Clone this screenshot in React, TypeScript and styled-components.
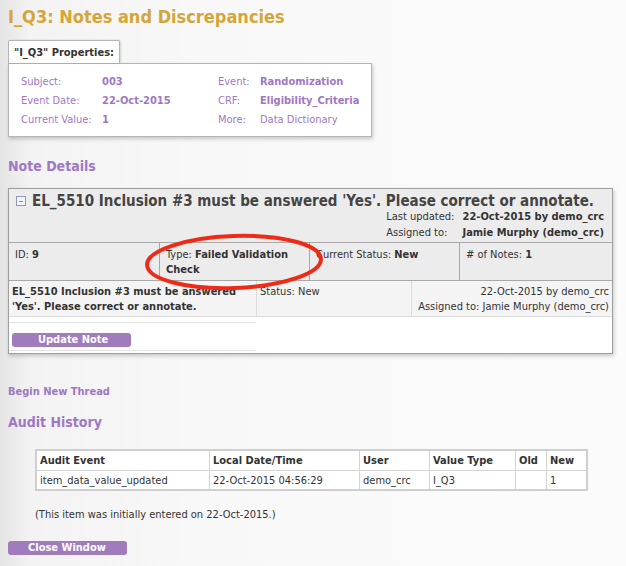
import styled, { createGlobalStyle } from 'styled-components';

const GlobalStyle = createGlobalStyle`
  body {
    margin: 0;
    background: linear-gradient(to right, #e4e4e4 0px, #f3f3f3 30px, #f8f8f8 200px, #fbfbfb 626px);
    font-family: Tahoma, 'DejaVu Sans Condensed', 'DejaVu Sans', sans-serif;
    font-size: 11px;
    color: #333;
  }
`;

const purple = '#9f78c3';

const Page = styled.div`
  position: relative;
  padding: 6px 8px 20px 8px;
  width: 626px;
  box-sizing: border-box;
`;

const Title = styled.h1`
  margin: 0;
  font-size: 18px;
  line-height: 22px;
  color: #d4a638;
  font-weight: bold;
`;

const PropsWrap = styled.div`
  margin-top: 12px;
  width: 364px;
`;

const PropsTab = styled.div`
  display: inline-block;
  background: #fff;
  border: 1px solid #b5b5b5;
  border-bottom: none;
  border-radius: 2px 2px 0 0;
  padding: 5px 5px 4px 5px;
  font-weight: bold;
  color: #333;
  box-shadow: 1px 0 2px rgba(0, 0, 0, 0.15);
`;

const PropsBox = styled.div`
  background: #fff;
  border: 1px solid #b5b5b5;
  box-shadow: 1px 2px 4px rgba(0, 0, 0, 0.2);
  padding: 8px 12px 7px 12px;
  display: grid;
  grid-template-columns: 81px 116px 42px 1fr;
  grid-auto-rows: 19px;
  align-items: center;
`;

const PropLabel = styled.span`
  color: ${purple};
`;

const PropValue = styled.span<{ $bold?: boolean }>`
  color: ${purple};
  font-weight: ${(p) => (p.$bold ? 'bold' : 'normal')};
`;

const SectionTitle = styled.h2<{ $top: number }>`
  margin: ${(p) => p.$top}px 0 0 0;
  font-size: 14px;
  line-height: 18px;
  color: ${purple};
  font-weight: bold;
`;

const NoteBox = styled.div`
  margin-top: 13px;
  width: 603px;
  border: 1px solid #9e9e9e;
  background: #fff;
  box-shadow: 1px 2px 4px rgba(0, 0, 0, 0.2);
`;

const NoteHeader = styled.div`
  background: #ececec;
  padding: 3px 8px 1px 7px;
  border-bottom: 1px solid #a8a8a8;
`;

const NoteTitle = styled.div`
  display: flex;
  align-items: center;
  gap: 6px;
  font-size: 15px;
  line-height: 18px;
  font-weight: bold;
  color: #444;
`;

const Toggle = styled.span`
  width: 8px;
  height: 8px;
  border: 1px solid #8a9ac0;
  background: #f4f4f8;
  display: inline-flex;
  align-items: center;
  justify-content: center;
  &::after {
    content: '';
    width: 4px;
    height: 1px;
    background: ${purple};
  }
`;

const Meta = styled.div`
  display: grid;
  grid-template-columns: auto auto;
  justify-content: end;
  column-gap: 8px;
  line-height: 16px;
  margin-top: -1px;
`;

const MetaValue = styled.span`
  font-weight: bold;
  text-align: right;
`;

const StatusRow = styled.div`
  display: grid;
  grid-template-columns: 150px 150px 150px 1fr;
  background: #ececec;
  border-bottom: 1px solid #a8a8a8;
`;

const StatusCell = styled.div`
  padding: 4px 6px 3px 6px;
  line-height: 15px;
  border-left: 1px solid #a8a8a8;
  &:first-child {
    border-left: none;
  }
`;

const ThreadRow = styled.div`
  display: grid;
  grid-template-columns: 247px 155px 1fr;
  background: #f4f4f4;
  border-bottom: 1px solid #dcdcdc;
`;

const ThreadCell = styled.div<{ $right?: boolean }>`
  padding: 3px 3px 2px 3px;
  line-height: 15px;
  text-align: ${(p) => (p.$right ? 'right' : 'left')};
  border-left: 1px solid #dcdcdc;
  &:first-child {
    border-left: none;
  }
`;

const Bold = styled.b`
  color: #333;
`;

const ButtonArea = styled.div`
  margin-top: 5px;
  border-top: 1px solid #e2e2e2;
  padding: 10px 0 3px 3px;
  width: 244px;
  border-bottom: 1px solid #e2e2e2;
  margin-bottom: 2px;
`;

const PurpleButton = styled.button<{ $indent: number }>`
  display: block;
  width: 119px;
  height: 14px;
  border: none;
  border-radius: 3px;
  background: #a17cbd;
  color: #fff;
  font-family: inherit;
  font-size: 11px;
  font-weight: bold;
  line-height: 14px;
  text-align: left;
  padding: 0 0 0 ${(p) => p.$indent}px;
`;

const ThreadLink = styled.a`
  display: block;
  margin-top: 31px;
  color: ${purple};
  font-weight: bold;
  text-decoration: none;
  line-height: 14px;
`;

const AuditTable = styled.table`
  margin: 18px 0 0 27px;
  width: 549px;
  table-layout: fixed;
  border-collapse: collapse;
  border: 2px solid #cfcfcf;
  background: #fff;
`;

const Th = styled.th<{ $w: number }>`
  width: ${(p) => p.$w}px;
  text-align: left;
  font-weight: bold;
  padding: 0 3px;
  height: 19px;
  border: 1px solid #d4d4d4;
  color: #333;
  white-space: nowrap;
`;

const Td = styled.td`
  padding: 0 3px;
  height: 18px;
  border: 1px solid #d4d4d4;
  white-space: nowrap;
`;

const Footnote = styled.p`
  margin: 17px 0 0 27px;
  line-height: 14px;
`;

const CloseArea = styled.div`
  margin-top: 19px;
`;

const Ellipse = styled.svg`
  position: absolute;
  left: 143px;
  top: 233px;
  overflow: visible;
  pointer-events: none;
`;

export default function App() {
  return (
    <>
      <GlobalStyle />
      <Page>
        <Title>I_Q3: Notes and Discrepancies</Title>

        <PropsWrap>
          <PropsTab>"I_Q3" Properties:</PropsTab>
          <PropsBox>
            <PropLabel>Subject:</PropLabel>
            <PropValue $bold>003</PropValue>
            <PropLabel>Event:</PropLabel>
            <PropValue $bold>Randomization</PropValue>
            <PropLabel>Event Date:</PropLabel>
            <PropValue $bold>22-Oct-2015</PropValue>
            <PropLabel>CRF:</PropLabel>
            <PropValue $bold>Eligibility_Criteria</PropValue>
            <PropLabel>Current Value:</PropLabel>
            <PropValue $bold>1</PropValue>
            <PropLabel>More:</PropLabel>
            <PropValue>Data Dictionary</PropValue>
          </PropsBox>
        </PropsWrap>

        <SectionTitle $top={20}>Note Details</SectionTitle>

        <NoteBox>
          <NoteHeader>
            <NoteTitle>
              <Toggle />
              EL_5510 Inclusion #3 must be answered 'Yes'. Please correct or annotate.
            </NoteTitle>
            <Meta>
              <span>Last updated:</span>
              <MetaValue>22-Oct-2015 by demo_crc</MetaValue>
              <span>Assigned to:</span>
              <MetaValue>Jamie Murphy (demo_crc)</MetaValue>
            </Meta>
          </NoteHeader>
          <StatusRow>
            <StatusCell>
              ID: <Bold>9</Bold>
            </StatusCell>
            <StatusCell>
              Type: <Bold>Failed Validation Check</Bold>
            </StatusCell>
            <StatusCell>
              Current Status: <Bold>New</Bold>
            </StatusCell>
            <StatusCell>
              # of Notes: <Bold>1</Bold>
            </StatusCell>
          </StatusRow>
          <ThreadRow>
            <ThreadCell>
              <Bold>EL_5510 Inclusion #3 must be answered 'Yes'. Please correct or annotate.</Bold>
            </ThreadCell>
            <ThreadCell>Status: New</ThreadCell>
            <ThreadCell $right>
              22-Oct-2015 by demo_crc
              <br />
              Assigned to: Jamie Murphy (demo_crc)
            </ThreadCell>
          </ThreadRow>
          <ButtonArea>
            <PurpleButton $indent={26}>Update Note</PurpleButton>
          </ButtonArea>
        </NoteBox>

        <ThreadLink href="#">Begin New Thread</ThreadLink>

        <SectionTitle $top={14}>Audit History</SectionTitle>

        <AuditTable>
          <thead>
            <tr>
              <Th $w={166}>Audit Event</Th>
              <Th $w={143}>Local Date/Time</Th>
              <Th $w={63}>User</Th>
              <Th $w={79}>Value Type</Th>
              <Th $w={24}>Old</Th>
              <Th $w={33}>New</Th>
            </tr>
          </thead>
          <tbody>
            <tr>
              <Td>item_data_value_updated</Td>
              <Td>22-Oct-2015 04:56:29</Td>
              <Td>demo_crc</Td>
              <Td>I_Q3</Td>
              <Td></Td>
              <Td>1</Td>
            </tr>
          </tbody>
        </AuditTable>

        <Footnote>(This item was initially entered on 22-Oct-2015.)</Footnote>

        <CloseArea>
          <PurpleButton $indent={20}>Close Window</PurpleButton>
        </CloseArea>

        <Ellipse width="182" height="58" viewBox="0 0 182 58">
          <ellipse
            cx="91"
            cy="29"
            rx="87"
            ry="26"
            fill="none"
            stroke="#ef2b17"
            strokeWidth="4"
            transform="rotate(-2 91 29)"
          />
        </Ellipse>
      </Page>
    </>
  );
}
